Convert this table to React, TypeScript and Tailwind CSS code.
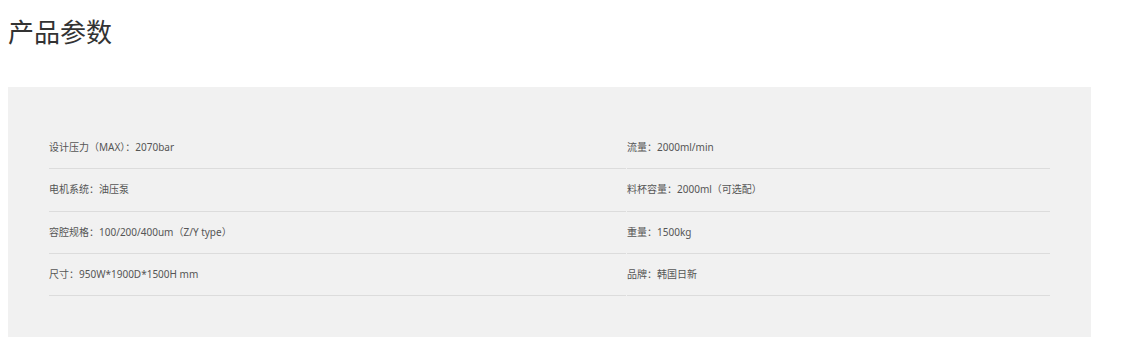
import React from 'react';

const params: [string, string][] = [
  ['设计压力（MAX）：2070bar', '流量：2000ml/min'],
  ['电机系统：油压泵', '料杯容量：2000ml（可选配）'],
  ['容腔规格：100/200/400um（Z/Y type）', '重量：1500kg'],
  ['尺寸：950W*1900D*1500H mm', '品牌：韩国日新'],
];

export default function App() {
  return (
    <div className="w-[1145px] h-[356px] bg-white pl-[8px] font-['Noto_Sans','Noto_Sans_CJK_SC',sans-serif]">
      <h2 className="pt-[15px] text-[26px] leading-[32px] text-[#333333] font-normal font-['Noto_Sans_CJK_SC',sans-serif]">
        产品参数
      </h2>
      <div className="mt-[40px] w-[1083px] bg-[#f1f1f1] pl-[41px] pt-[40px] pb-[41px]">
        <div className="grid grid-cols-[577px_423px] gap-x-px">
          {params.map(([left, right]) => (
            <React.Fragment key={left}>
              <div className="h-[42.33px] flex items-center border-b border-[#dcdcdc] text-[10px] text-[#555555]">
                {left}
              </div>
              <div className="h-[42.33px] flex items-center border-b border-[#dcdcdc] text-[10px] text-[#555555]">
                {right}
              </div>
            </React.Fragment>
          ))}
        </div>
      </div>
    </div>
  );
}
